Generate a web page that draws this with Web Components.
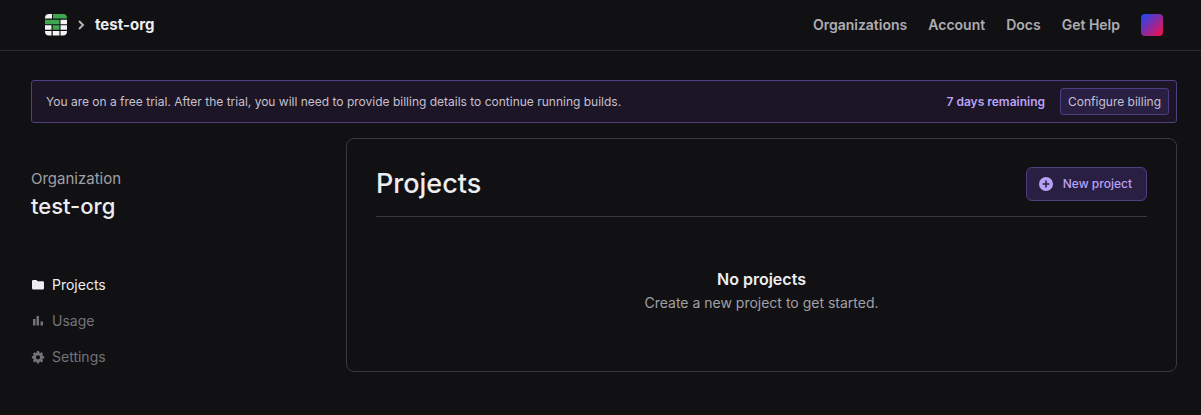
<!DOCTYPE html>
<html lang="en">
<head>
<meta charset="utf-8">
<meta name="viewport" content="width=device-width, initial-scale=1">
<title>test-org</title>
<style>
  :root {
    --bg: #111113;
    --line: #3a3a3e;
    --text: #ededef;
    --muted: #a0a0a6;
    --dim: #737378;
    --violet: #b9a2f5;
    --violet-line: #4d3f80;
    --violet-bg: #291f43;
  }
  body {
    margin: 0;
    min-height: 100vh;
    background: var(--bg);
    color: var(--text);
    font-family: Inter, "Liberation Sans", sans-serif;
    font-size: 12px;
    line-height: 20px;
  }
</style>
</head>
<body>
<app-header org="test-org">
  <nav-link href="#organizations">Organizations</nav-link>
  <nav-link href="#account">Account</nav-link>
  <nav-link href="#docs">Docs</nav-link>
  <nav-link href="#help">Get Help</nav-link>
</app-header>
<page-layout>
  <trial-banner slot="banner" remaining="7 days remaining">You are on a free trial. After the trial, you will need to provide billing details to continue running builds.</trial-banner>
  <side-bar slot="sidebar" org="test-org">
    <side-link icon="folder" href="#projects" active>Projects</side-link>
    <side-link icon="chart" href="#usage">Usage</side-link>
    <side-link icon="gear" href="#settings">Settings</side-link>
  </side-bar>
  <project-card heading="Projects">
    <empty-state heading="No projects">Create a new project to get started.</empty-state>
  </project-card>
</page-layout>

<script>
const ICONS = {
  folder: `<path d="M1 3.200A1.200 1.200 0 0 1 2.200 2h3.200l1.300 1.300h5.100A1.200 1.200 0 0 1 13 4.500v5.800a1.200 1.200 0 0 1-1.200 1.200H2.200A1.200 1.200 0 0 1 1 10.300z"/>`,
  chart: `<path d="M2 5h2.500v6.500H2zM5.500 2H8v9.500H5.500zM9.500 7.500H12v4H9.500z"/>`,
  gear: `<path transform="translate(1 .6) scale(.86)" fill-rule="evenodd" d="M5.800 .6h2.400l.4 1.700 1.100.5 1.500-.9 1.700 1.700-.9 1.500.5 1.100 1.700.4v2.400l-1.700.4-.5 1.100.9 1.500-1.700 1.700-1.500-.9-1.100.5-.4 1.700H5.800l-.4-1.700-1.100-.5-1.500.9-1.700-1.700.9-1.500-.5-1.100L-.2 9V6.600l1.700-.4.5-1.100-.9-1.500 1.700-1.700 1.500.9 1.100-.5zM7 5.300a2.500 2.500 0 1 0 0 5 2.500 2.500 0 0 0 0-5z"/>`,
  plus: `<path fill-rule="evenodd" d="M7 0a7 7 0 1 0 0 14A7 7 0 0 0 7 0zM6.200 3.600h1.600v2.600h2.600v1.600H7.800v2.600H6.200V7.800H3.600V6.200h2.600z"/>`
};

const icon = (name, size) =>
  `<svg width="${size}" height="${size}" viewBox="0 0 14 14" fill="currentColor" aria-hidden="true">${ICONS[name]}</svg>`;

class AppHeader extends HTMLElement {
  constructor() {
    super();
    this.attachShadow({ mode: "open" });
  }

  connectedCallback() {
    this.shadowRoot.innerHTML = `
      <style>
        :host { display: block; border-bottom: 1px solid #2b2b2e; }
        header {
          display: flex;
          align-items: center;
          justify-content: space-between;
          height: 50px;
          padding: 0 38px 0 45px;
        }
        .crumbs { display: flex; align-items: center; gap: 10px; }
        .crumbs a { display: flex; color: inherit; text-decoration: none; }
        .org { font-size: 15px; font-weight: 700; }
        nav { display: flex; align-items: center; gap: 21px; }
        .avatar {
          width: 22px;
          height: 22px;
          padding: 0;
          border: 0;
          border-radius: 4px;
          background: linear-gradient(135deg, #2b45e8 10%, #8b2aa0 50%, #f01050 95%);
        }
      </style>
      <header>
        <div class="crumbs">
          <a href="#home" aria-label="Home">
            <svg width="22" height="22" viewBox="0 0 22 22" aria-hidden="true">
              <path fill="#f4f4f5" d="M4 0h3v4.600H0V4a4 4 0 0 1 4-4zM15.500 5.700H22v4.500h-6.500zM0 11.300h6.500v4.500H0zM15.500 11.300H22v4.500h-6.500zM0 17h6.500v4.500H4a4 4 0 0 1-4-4zM7.700 17h6.700v4.500H7.700zM15.500 17H22v.5a4 4 0 0 1-4 4h-2.500z"/>
              <path fill="#3fa751" d="M8 0h10a4 4 0 0 1 4 4v.6H8zM0 5.700h14.400v4.500H0zM7.700 11.300h6.700v4.500H7.700z"/>
            </svg>
          </a>
          <svg width="8" height="10" viewBox="0 0 8 10" fill="none" stroke="#b4b4b8" stroke-width="2" aria-hidden="true"><path d="M2 1l4 4-4 4"/></svg>
          <a class="org" href="#org">${this.getAttribute("org")}</a>
        </div>
        <nav><slot></slot><button class="avatar" aria-label="Account menu"></button></nav>
      </header>
    `;
  }
}

class NavLink extends HTMLElement {
  constructor() {
    super();
    this.attachShadow({ mode: "open" });
  }

  connectedCallback() {
    this.shadowRoot.innerHTML = `
      <style>
        :host { display: block; font-size: 14px; font-weight: 600; white-space: nowrap; }
        a { color: #adadb3; text-decoration: none; }
        a:hover { color: var(--text); }
      </style>
      <a href="${this.getAttribute("href")}"><slot></slot></a>
    `;
  }
}

class PageLayout extends HTMLElement {
  constructor() {
    super();
    this.attachShadow({ mode: "open" });
    this.shadowRoot.innerHTML = `
      <style>
        :host { display: block; padding: 29px 24px 43px 31px; }
        .columns {
          display: grid;
          grid-template-columns: minmax(160px, 285px) minmax(0, 1fr);
          gap: 30px;
          margin-top: 15px;
        }
      </style>
      <slot name="banner"></slot>
      <div class="columns">
        <slot name="sidebar"></slot>
        <main><slot></slot></main>
      </div>
    `;
  }
}

class TrialBanner extends HTMLElement {
  constructor() {
    super();
    this.attachShadow({ mode: "open" });
  }

  connectedCallback() {
    this.shadowRoot.innerHTML = `
      <style>
        :host {
          display: flex;
          align-items: center;
          gap: 15px;
          padding: 7px 7px 7px 14px;
          border: 1px solid var(--violet-line);
          border-radius: 3px;
          background: #1b1525;
          color: #c6c0d0;
          line-height: 19px;
        }
        p { flex: 1; margin: 0; }
        strong { color: var(--violet); font-weight: 600; }
        button {
          padding: 3px 7px;
          border: 1px solid var(--violet-line);
          border-radius: 3px;
          background: var(--violet-bg);
          color: inherit;
          font: inherit;
        }
      </style>
      <p><slot></slot></p>
      <strong>${this.getAttribute("remaining")}</strong>
      <button type="button">Configure billing</button>
    `;
  }
}

class SideBar extends HTMLElement {
  constructor() {
    super();
    this.attachShadow({ mode: "open" });
  }

  connectedCallback() {
    this.shadowRoot.innerHTML = `
      <style>
        :host { display: block; padding-top: 31px; }
        p { margin: 0; color: var(--muted); font-size: 15px; }
        h2 { margin: 0; font-size: 22px; font-weight: 500; line-height: 34px; }
        nav { display: grid; gap: 16px; margin-top: 52px; }
      </style>
      <p>Organization</p>
      <h2>${this.getAttribute("org")}</h2>
      <nav><slot></slot></nav>
    `;
  }
}

class SideLink extends HTMLElement {
  constructor() {
    super();
    this.attachShadow({ mode: "open" });
  }

  connectedCallback() {
    this.shadowRoot.innerHTML = `
      <style>
        :host { display: block; color: var(--dim); font-size: 14px; }
        :host([active]) { color: var(--text); }
        a { display: flex; align-items: center; gap: 7px; color: inherit; text-decoration: none; }
      </style>
      <a href="${this.getAttribute("href")}">${icon(this.getAttribute("icon"), 14)}<slot></slot></a>
    `;
  }
}

class ProjectCard extends HTMLElement {
  constructor() {
    super();
    this.attachShadow({ mode: "open" });
  }

  connectedCallback() {
    this.shadowRoot.innerHTML = `
      <style>
        :host {
          display: block;
          padding: 28px 29px 56px;
          border: 1px solid var(--line);
          border-radius: 8px;
        }
        header {
          display: flex;
          align-items: center;
          justify-content: space-between;
          padding-bottom: 15px;
          border-bottom: 1px solid var(--line);
        }
        h1 { margin: 0; font-size: 27px; font-weight: 500; line-height: 34px; }
        button {
          display: flex;
          align-items: center;
          gap: 10px;
          padding: 6px 14px 6px 12px;
          border: 1px solid var(--violet-line);
          border-radius: 6px;
          background: var(--violet-bg);
          color: var(--violet);
          font: inherit;
          font-weight: 500;
        }
      </style>
      <header>
        <h1>${this.getAttribute("heading")}</h1>
        <button type="button">${icon("plus", 14)}New project</button>
      </header>
      <slot></slot>
    `;
  }
}

class EmptyState extends HTMLElement {
  constructor() {
    super();
    this.attachShadow({ mode: "open" });
  }

  connectedCallback() {
    this.shadowRoot.innerHTML = `
      <style>
        :host { display: block; padding-top: 50px; text-align: center; }
        h3 { margin: 0; font-size: 16px; font-weight: 600; line-height: 24px; }
        p { margin: 0; color: var(--muted); font-size: 14px; line-height: 24px; }
      </style>
      <h3>${this.getAttribute("heading")}</h3>
      <p><slot></slot></p>
    `;
  }
}

customElements.define("app-header", AppHeader);
customElements.define("nav-link", NavLink);
customElements.define("page-layout", PageLayout);
customElements.define("trial-banner", TrialBanner);
customElements.define("side-bar", SideBar);
customElements.define("side-link", SideLink);
customElements.define("project-card", ProjectCard);
customElements.define("empty-state", EmptyState);
</script>
</body>
</html>
